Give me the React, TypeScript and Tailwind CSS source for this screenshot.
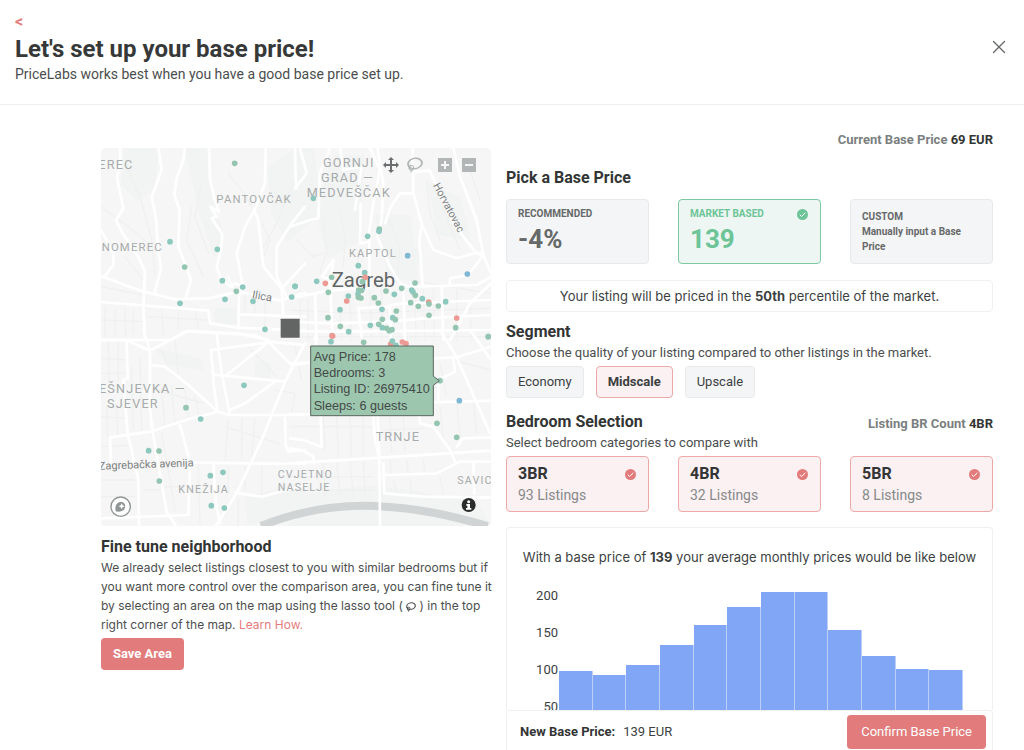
import { X } from "lucide-react";

type Dot = [number, number, string?];

const GREEN = "#93c5b0";
const TEAL = "#8cc8bd";
const BLUE = "#7fb8d2";
const RED = "#ec9a93";

const dotsNW: Dot[] = [
  [419, 70], [225, 305, TEAL], [367, 328, TEAL], [269, 381], [382, 422, TEAL], [443, 441, TEAL],
  [424, 454], [390, 478, TEAL], [255, 490, TEAL], [474, 484, TEAL], [600, 439, TEAL], [590, 471, TEAL],
  [510, 568, TEAL],
];
const dotsNE: Dot[] = [
  [70, 175, TEAL], [268, 267], [267, 274, TEAL], [233, 289, TEAL], [353, 347, BLUE], [532, 402, BLUE],
  [205, 377, TEAL], [224, 398, TEAL], [226, 412, RED], [217, 425], [125, 412], [80, 424, TEAL],
  [106, 430, RED], [115, 457], [15, 439, TEAL], [175, 468, TEAL], [170, 483, RED], [150, 509, TEAL],
  [114, 533], [151, 559], [176, 575, TEAL], [126, 587, RED], [206, 450], [204, 462, TEAL], [205, 472],
  [215, 451], [213, 474], [253, 473], [265, 489], [288, 453], [313, 463, TEAL], [335, 445], [375, 429],
  [365, 450, TEAL], [369, 456, TEAL], [376, 466], [362, 488], [397, 476, TEAL], [385, 499],
  [416, 486, RED], [417, 492], [445, 498], [467, 485, TEAL], [417, 526], [500, 534, RED], [497, 563],
  [276, 508, TEAL], [319, 513], [241, 556, TEAL], [266, 553], [277, 538], [308, 533, TEAL], [316, 539],
  [277, 563, TEAL], [290, 565], [298, 572], [306, 569], [595, 590],
];
const dotsSW: Dot[] = [
  [447, 166, TEAL], [273, 233], [317, 267, TEAL], [161, 362, TEAL], [192, 363], [193, 453],
  [346, 437, TEAL], [384, 427, TEAL], [349, 527, TEAL], [388, 534, TEAL],
];
const dotsSE: Dot[] = [
  [123, 35, TEAL], [128, 18, RED], [221, 37], [302, 42, RED], [307, 33, TEAL], [318, 46, TEAL],
  [337, 36, RED], [348, 41, RED], [595, 20], [450, 152], [508, 212, BLUE], [441, 280], [500, 322],
];

function Dots({ items }: { items: Dot[] }) {
  return (
    <>
      {items.map(([x, y, c], i) => (
        <circle key={i} cx={x} cy={y} r="8.5" fill={c ?? GREEN} />
      ))}
    </>
  );
}

function Roads({ main, minor }: { main: string[]; minor: string[] }) {
  return (
    <g fill="none" strokeLinejoin="round" strokeLinecap="round">
      {minor.map((d, i) => (
        <path key={i} d={d} stroke="#eff0f0" strokeWidth="4" />
      ))}
      {main.map((d, i) => (
        <path key={i} d={d} stroke="#ffffff" strokeWidth="8" />
      ))}
    </g>
  );
}

const mainNW = [
  "M75 24L76 70L66 115L85 205L63 240L80 275L130 350L150 395L145 500L150 600",
  "M190 24L200 90L170 170L182 230L190 330L198 385L180 455",
  "M270 24L265 60L245 115L238 165L254 210L250 320L270 370L288 420L272 475",
  "M342 24L345 120L358 175L372 215L346 200L365 230L350 235L382 282L378 330L365 380L375 410L405 440",
  "M512 24L510 130L478 212L450 260L425 340L442 430L432 470L430 565",
  "M478 212L490 240L505 380L560 446L630 370",
  "M600 24L602 120L606 145",
  "M630 200L590 250L545 320L545 410L575 470",
  "M18 408L130 450L240 478L340 475L430 455L555 482L630 458",
  "M18 486L340 512L345 550L430 563L630 572",
  "M18 600L230 600L275 573L430 580L520 600",
  "M432 523L630 530", "M560 450L565 530", "M18 270L55 340L55 375L30 408",
  "M400 410L412 440L418 430L445 440",
];
const minorNW = [
  "M95 80L135 170L170 300L180 400", "M18 200L100 260L160 310", "M290 200L275 300L325 410",
  "M318 140L300 230L340 340", "M400 100L440 150L470 200", "M20 440L140 465", "M30 500L30 590",
  "M60 510L60 590", "M90 505L92 590", "M115 510L115 580", "M200 500L205 585", "M250 505L250 570",
  "M18 540L145 545", "M160 530L340 540", "M500 250L525 300L505 350", "M590 140L540 260L500 330",
  "M450 460L450 520", "M480 470L480 520", "M510 480L510 560", "M90 350L145 420", "M300 500L310 570",
];
const mainNE = [
  "M30 24L50 100L15 145", "M150 24L160 90L215 80L195 210",
  "M240 24L270 90L250 190L238 270L238 390L240 440",
  "M262 24L280 130L275 240L262 290L300 380L330 430L360 440L560 435L603 410",
  "M0 260L60 240L85 235L90 100L120 24", "M210 310L240 305", "M210 310L212 190",
  "M368 24L370 160L330 160L300 205L285 250", "M370 160L395 250L430 330L500 355L555 340L580 343",
  "M370 95L420 92L490 250L555 335L580 345", "M490 24L510 110L560 240L580 345L603 400",
  "M395 255L388 300L398 440", "M580 345L535 405L480 415L478 436",
  "M0 475L100 455L240 440", "M0 545L130 550L300 545L400 535L500 530L603 525",
  "M0 573L130 575L600 570", "M130 360L120 430L128 590", "M205 505L300 500L303 600",
  "M205 505L215 590", "M340 445L345 600", "M455 440L460 600", "M603 430L540 490L480 600",
  "M300 495L345 490L603 480", "M75 460L80 600", "M130 360L95 410L130 420",
];
const minorNE = [
  "M100 240L110 330L90 400", "M150 210L165 300L160 380", "M210 330L200 380", "M300 240L330 330L320 420",
  "M410 120L420 220L450 300", "M440 160L480 260L510 330", "M530 60L570 180", "M30 480L30 600",
  "M55 480L55 600", "M150 500L155 600", "M180 480L185 600", "M240 450L245 600", "M275 450L275 600",
  "M375 450L378 600", "M400 450L405 600", "M430 450L432 600", "M500 450L500 600", "M540 500L545 600",
  "M0 510L200 520L450 510L600 505", "M300 410L600 460", "M0 590L600 590", "M20 300L70 350L100 340",
];
const mainSW = [
  "M18 30L95 30L165 62L275 4L480 15L520 35L630 45", "M145 0L165 62L165 240L172 300L215 545L245 591",
  "M95 30L98 145L85 150L98 310L130 450L132 591", "M165 105L210 110L280 165L368 245L405 255L630 255",
  "M365 10L380 130L405 255", "M348 60L500 40L515 40L395 135", "M348 60L358 180L368 245L290 265L165 305L45 322L48 395",
  "M358 134L570 155", "M405 240L450 220L540 155", "M520 35L590 105L630 100",
  "M630 40L570 155L500 330L425 490L360 591", "M255 285L285 395L280 555L18 565",
  "M285 398L630 402", "M570 265L572 345L580 365L630 360", "M355 400L362 520L375 580",
  "M420 488L500 500L630 465",
];
const minorSW = [
  "M18 85L90 90", "M18 130L95 130", "M40 35L42 160", "M70 35L70 150", "M18 260L95 265",
  "M35 225L38 320", "M65 225L68 315", "M110 110L115 300", "M135 80L140 300", "M18 350L110 345",
  "M200 60L220 110", "M240 30L250 130", "M200 180L210 290", "M230 170L240 280", "M270 180L280 260",
  "M300 195L310 250", "M180 180L330 220", "M400 270L390 390", "M440 265L440 390", "M480 265L470 390",
  "M390 290L550 340", "M460 50L545 140", "M540 180L600 190L590 250", "M200 310L225 450L240 540",
  "M310 405L315 580", "M400 410L400 490", "M450 410L450 480", "M500 410L500 490", "M210 470L270 470",
  "M20 450L120 450", "M20 500L120 500", "M150 480L200 480", "M430 510L430 591", "M600 50L620 150",
];
const mainSE = [
  "M75 20L82 55", "M0 100L60 98", "M0 253L60 253L430 217L603 212",
  "M430 85L500 82L603 50", "M450 0L500 82L600 310", "M490 85L495 125L445 150L445 212",
  "M250 257L255 330L268 380L270 591", "M263 257L268 380", "M0 400L603 362",
  "M92 257L95 350L40 330L0 325", "M285 435L440 430L510 395L603 395", "M280 400L283 490L400 500L603 503",
  "M388 257L390 280L430 290L480 360L495 395", "M550 395L553 490", "M500 350L520 325L603 322",
  "M540 0L603 90", "M0 355L40 362L70 380L72 400",
];
const minorSE = [
  "M100 260L105 360", "M140 257L145 380", "M180 257L185 380", "M220 257L220 375", "M0 290L250 290",
  "M300 257L305 370", "M340 257L345 365", "M280 300L400 295", "M450 230L460 330", "M500 215L510 320",
  "M550 215L560 310", "M300 390L305 430", "M350 390L355 430", "M400 390L405 430", "M310 450L320 490",
  "M360 445L365 490", "M450 440L460 500", "M490 90L600 120", "M450 100L470 200", "M100 400L105 500",
  "M140 400L150 500", "M180 395L190 500", "M220 395L225 500", "M0 440L250 440", "M0 480L250 480",
];

function NeighborhoodMap() {
  return (
    <svg
      viewBox="0 0 1170 1134"
      className="block h-auto w-full font-[Roboto,'Noto_Sans',sans-serif]"
      role="img"
      aria-label="Map"
    >
      <rect width="1170" height="1134" fill="#f6f6f6" />
      <g fill="#f2f3f3">
        <path d="M70 0H175L160 120L110 160L60 110Z" />
        <path d="M250 0H320L345 190L370 260L340 330L290 180Z" />
        <path d="M500 60L580 0H640L660 200L560 280L510 200Z" />
        <path d="M700 20H790L780 280L680 330L640 180Z" />
        <path d="M820 200L930 200L950 400L860 380Z" />
        <path d="M980 100L1080 150L1110 280L1010 260Z" />
        <path d="M340 480H410V530H340Z" />
        <path d="M160 600L300 630L310 670L200 650Z" />
        <path d="M460 640H510V690H460Z" />
        <path d="M910 300H960V350H910Z" />
        <path d="M430 1050L600 1000L640 1080L440 1134Z" />
        <path d="M590 1040L820 1010L1130 1060L1170 1134H560Z" />
      </g>
      <g transform="translate(-18 -24)"><Roads main={mainNW} minor={minorNW} /></g>
      <g transform="translate(567 -24)"><Roads main={mainNE} minor={minorNE} /></g>
      <g transform="translate(-18 546)"><Roads main={mainSW} minor={minorSW} /></g>
      <path
        d="M480 1134C590 1090 700 1070 820 1074C950 1080 1040 1100 1160 1134"
        fill="none"
        stroke="#d0d4d4"
        strokeWidth="24"
      />
      <g transform="translate(567 546)"><Roads main={mainSE} minor={minorSE} /></g>

      <g fill="#a6abab" fontSize="35" className="tracking-widest">
        <text x="-8" y="62" fontSize="38">EREC</text>
        <text x="346" y="164" fontSize="34">PANTOVČAK</text>
        <text x="2" y="309" fontSize="34">NOMEREC</text>
        <text x="666" y="56" fontSize="38">GORNJI</text>
        <text x="660" y="102" fontSize="38">GRAD —</text>
        <text x="617" y="147" fontSize="38">MEDVEŠČAK</text>
        <text x="744" y="326" fontSize="33">KAPTOL</text>
        <text x="-6" y="734" fontSize="38">EŠNJEVKA —</text>
        <text x="18" y="779" fontSize="38">SJEVER</text>
        <text x="824" y="880" fontSize="38">TRNJE</text>
        <text x="232" y="1034" fontSize="32">KNEŽIJA</text>
        <text x="530" y="990" fontSize="32">CVJETNO</text>
        <text x="530" y="1029" fontSize="32">NASELJE</text>
        <text x="1069" y="1008" fontSize="32">SAVIC</text>
      </g>
      <g fill="#7b8080">
        <text x="-6" y="965" fontSize="33" transform="rotate(-2 -6 965)">Zagrebačka avenija</text>
        <text x="452" y="450" fontSize="33" transform="rotate(10 452 450)">Ilica</text>
        <text x="996" y="112" fontSize="32" transform="rotate(62 996 112)">Horvatovac</text>
      </g>
      <text x="692" y="416" fontSize="61" fill="#626666">Zagreb</text>

      <g transform="translate(-18 -24)"><Dots items={dotsNW} /></g>
      <g transform="translate(567 -24)"><Dots items={dotsNE} /></g>
      <g transform="translate(-18 546)"><Dots items={dotsSW} /></g>
      <g transform="translate(567 546)"><Dots items={dotsSE} /></g>
      <rect x="539" y="512" width="57" height="57" rx="2" fill="#636565" />

      <path d="M629 594H997V685L1015 698L997 712V803H629Z" fill="#9dc6af" stroke="#5b6661" strokeWidth="3" />
      <g fill="#444a47" fontSize="38" className="font-['Liberation_Sans',Arial,sans-serif]">
        <text x="638" y="638">Avg Price: 178</text>
        <text x="638" y="687">Bedrooms: 3</text>
        <text x="638" y="736">Listing ID: 26975410</text>
        <text x="638" y="786">Sleeps: 6 guests</text>
      </g>

      <g transform="translate(59 1076)">
        <circle r="29" fill="#fff" stroke="#8f9494" strokeWidth="4" />
        <path d="M-15 14C-18 -2 -12 -15 3 -15A14.500 14.500 0 0 1 3 13C-2 16 -9 16 -15 14Z" fill="#8f9494" />
        <path d="M3 -10L6 -4L12 -1L6 2L3 8L0 2L-6 -1L0 -4Z" fill="#fff" />
      </g>
      <g transform="translate(1103 1071)">
        <circle r="21" fill="#2a2b2b" />
        <circle cy="-10" r="4.500" fill="#fff" />
        <path d="M-7 -3H4V9H8V14H-8V9H-4V2H-7Z" fill="#fff" />
      </g>
    </svg>
  );
}

const LASSO =
  "m1018 538c-36 207-290 336-568 286-277-48-473-256-436-463 10-57 36-108 76-151-13-66 11-137 68-183 34-28 75-41 114-42l-55-70 0 0c-2-1-3-2-4-3-10-14-8-34 5-45 14-11 34-8 45 4 1 1 2 3 2 5l0 0 113 140c16 11 31 24 45 40 4 3 6 7 8 11 48-3 100 0 151 9 278 48 473 255 436 462z m-624-379c-80 14-149 48-197 96 42 42 109 47 156 9 33-26 47-66 41-105z m-187-74c-19 16-33 37-39 60 50-32 109-55 174-68-42-25-95-24-135 8z m360 75c-34-7-69-9-102-8 8 62-16 128-68 170-73 59-175 54-244-5-9 20-16 40-20 61-28 159 121 317 333 354s407-60 434-217c28-159-121-318-333-355z";
const PAN =
  "m1000 350l-187 188 0-125-250 0 0 250 125 0-188 187-187-187 125 0 0-250-250 0 0 125-188-188 186-187 0 125 252 0 0-250-125 0 187-188 188 188-125 0 0 250 250 0 0-126 187 188z";
const ZOOM_IN =
  "m1 787l0-875 875 0 0 875-875 0z m687-500l-187 0 0-187-125 0 0 187-188 0 0 125 188 0 0 187 125 0 0-187 187 0 0-125z";
const ZOOM_OUT = "m0 788l0-876 875 0 0 876-875 0z m688-500l-500 0 0 125 500 0 0-125z";

function Glyph({ d, box, className }: { d: string; box: string; className: string }) {
  return (
    <svg viewBox={box} className={className} fill="currentColor" aria-hidden="true">
      <path d={d} transform="matrix(1 0 0 -1 0 850)" />
    </svg>
  );
}

function MapToolbar() {
  return (
    <div className="absolute top-2 right-2.5 flex h-4.5 items-center text-[#b3b6b6]">
      <button type="button" aria-label="Pan" className="flex w-6 justify-center text-[#6b6f6f]">
        <Glyph d={PAN} box="0 0 1000 1000" className="size-4" />
      </button>
      <button type="button" aria-label="Lasso select" className="flex w-6 justify-center">
        <Glyph d={LASSO} box="0 0 1031 1000" className="size-4" />
      </button>
      <button type="button" aria-label="Zoom in" className="ml-1.5 flex w-6 justify-center">
        <Glyph d={ZOOM_IN} box="0 62 876 876" className="size-3.5" />
      </button>
      <button type="button" aria-label="Zoom out" className="flex w-6 justify-center">
        <Glyph d={ZOOM_OUT} box="0 62 876 876" className="size-3.5" />
      </button>
    </div>
  );
}

function Check({ className }: { className: string }) {
  return (
    <svg viewBox="0 0 22 22" className={className} aria-hidden="true">
      <circle cx="11" cy="11" r="11" fill="currentColor" />
      <path d="M5.500 11.500L9.300 15L16.500 7.500" fill="none" stroke="#fff" strokeWidth="2" />
    </svg>
  );
}

const heading = "text-base leading-[22px] font-bold text-[#333535]";
const note = "text-[13px] leading-5 text-[#4b4e4e]";

const bedrooms = [
  { name: "3BR", count: 93 },
  { name: "4BR", count: 32 },
  { name: "5BR", count: 8 },
];
const monthly = [99, 93, 107, 134, 161, 185, 205, 205, 154, 119, 102, 100];
const PX_PER_UNIT = 0.74;

export default function App() {
  return (
    <div className="flex h-screen flex-col bg-white font-[Roboto,'Noto_Sans',sans-serif] text-[#3c3f3f]">
      <header className="flex shrink-0 items-start justify-between border-b border-[#eeeeee] pt-3 pr-[14px] pb-[22px] pl-[15px]">
        <div>
          <a href="#back" aria-label="Back" className="block text-base leading-5 font-bold text-[#e57c7c]">&lt;</a>
          <h1 className="text-2xl leading-[34px] font-bold text-[#373939]">Let's set up your base price!</h1>
          <p className="text-sm leading-4 text-[#4b4e4e]">PriceLabs works best when you have a good base price set up.</p>
        </div>
        <button type="button" aria-label="Close" className="mt-6 text-[#666969]">
          <X className="size-[22px]" strokeWidth={1.5} />
        </button>
      </header>

      <main className="grid min-h-0 flex-1 grid-cols-[390fr_487fr] gap-[15px] pr-[31px] pl-[101px]">
        <section className="pt-[43px]">
          <div className="relative overflow-hidden rounded">
            <NeighborhoodMap />
            <MapToolbar />
          </div>
          <h2 className={"mt-[10px] " + heading}>Fine tune neighborhood</h2>
          <p className="-mr-1 font-[Inter,sans-serif] text-xs leading-[19px] text-[#4b4e4e]">
            We already select listings closest to you with similar bedrooms but if you want more control over the
            comparison area, you can fine tune it by selecting an area on the map using the lasso tool ({" "}
            <Glyph d={LASSO} box="0 0 1031 1000" className="inline size-2.5" /> ) in the top right corner of the map.{" "}
            <a href="#learn" className="text-[#e57c7c]">Learn How.</a>
          </p>
          <button type="button" className="mt-1 h-8 rounded bg-[#e27b7b] px-3 text-[13px] font-bold text-white">
            Save Area
          </button>
        </section>

        <section className="flex min-h-0 flex-col pt-6">
          <p className="text-right text-[13px] leading-[22px] font-bold text-[#7b7f7f]">
            Current Base Price <span className="text-[#333535]">69 EUR</span>
          </p>
          <h2 className={"mt-4 " + heading}>Pick a Base Price</h2>
          <div className="mt-[10px] grid shrink-0 grid-cols-3 gap-[29px]">
            <button type="button" className="flex h-[65px] flex-col rounded border border-[#e8eaea] bg-[#f4f5f7] pt-1.5 pr-3 pl-[11px] text-left font-bold text-[#666969]">
              <span className="text-[10px] leading-4">RECOMMENDED</span>
              <span className="text-[26px] leading-[34px]">-4%</span>
            </button>
            <button type="button" aria-pressed="true" className="flex h-[65px] flex-col rounded border border-[#7cc8a5] bg-[#edf6f3] pt-1.5 pr-3 pl-[11px] text-left font-bold text-[#6cc497]">
              <span className="flex w-full items-center justify-between text-[10px] leading-4">
                MARKET BASED <Check className="size-[11px]" />
              </span>
              <span className="text-[26px] leading-[34px]">139</span>
            </button>
            <button type="button" className="flex h-[65px] flex-col justify-center rounded border border-[#e8eaea] bg-[#f4f5f7] pr-3 pl-[11px] text-left text-[10px] leading-[15px] font-bold text-[#666969]">
              <span>CUSTOM</span>
              <span>Manually input a Base Price</span>
            </button>
          </div>
          <p className="mt-4 rounded border border-[#f0f0f0] text-center font-[Inter,sans-serif] text-[13px] leading-[30px] text-[#3c3f3f]">
            Your listing will be priced in the <b>50th</b> percentile of the market.
          </p>

          <h2 className={"mt-[9px] " + heading}>Segment</h2>
          <p className={note}>Choose the quality of your listing compared to other listings in the market.</p>
          <div className="mt-[3px] flex gap-3 text-[13px]">
            <button type="button" className="h-8 rounded border border-[#e8eaea] bg-[#f4f5f7] px-[11px]">Economy</button>
            <button type="button" aria-pressed="true" className="h-8 rounded border border-[#eda9a8] bg-[#fbf0f2] px-[11px] font-bold">Midscale</button>
            <button type="button" className="h-8 rounded border border-[#e8eaea] bg-[#f4f5f7] px-[11px]">Upscale</button>
          </div>

          <div className="mt-[13px] flex items-end justify-between">
            <h2 className={heading}>Bedroom Selection</h2>
            <p className="text-[13px] leading-[18px] font-bold text-[#7b7f7f]">
              Listing BR Count <span className="text-[#333535]">4BR</span>
            </p>
          </div>
          <p className={note}>Select bedroom categories to compare with</p>
          <div className="mt-[3px] grid shrink-0 grid-cols-3 gap-[29px]">
            {bedrooms.map((b) => (
              <button key={b.name} type="button" aria-pressed="true" className="flex h-14 flex-col justify-center rounded border border-[#eda9a8] bg-[#fbf0f2] pr-3 pl-[11px] text-left">
                <span className="flex w-full items-center justify-between text-base leading-[22px] font-bold text-[#333535]">
                  {b.name} <Check className="size-[11px] text-[#e27b7b]" />
                </span>
                <span className="text-sm leading-5 text-[#868a8a]">{b.count} Listings</span>
              </button>
            ))}
          </div>

          <div className="mt-[15px] min-h-0 flex-1 overflow-hidden rounded-t border border-b-0 border-[#f0f0f0]">
            <p className="pt-[18px] text-center font-[Inter,sans-serif] text-[13px] leading-[22px]">
              With a base price of <b>139</b> your average monthly prices would be like below
            </p>
            <div className="mt-[9px] flex pr-[29px]">
              <div className="w-13 shrink-0 pr-px text-right text-[13px] leading-[37px]">
                <div>200</div>
                <div>150</div>
                <div>100</div>
                <div>50</div>
              </div>
              <div className="flex h-[167px] flex-1 items-end">
                {monthly.map((v, i) => (
                  <div key={i} className="flex-1 border-r border-[#bcd0fa] bg-[#80a6f5]" style={{ height: v * PX_PER_UNIT }} />
                ))}
              </div>
            </div>
          </div>
          <footer className="flex shrink-0 items-center justify-between rounded-t border border-b-0 border-[#f0f0f0] pt-1 pr-1.5 pb-px pl-[13px] text-[13px]">
            <p>
              <b className="text-[#333535]">New Base Price:</b>
              <span className="ml-2">139 EUR</span>
            </p>
            <button type="button" className="h-[34px] rounded bg-[#e27b7b] px-3.5 text-white">Confirm Base Price</button>
          </footer>
        </section>
      </main>
    </div>
  );
}
